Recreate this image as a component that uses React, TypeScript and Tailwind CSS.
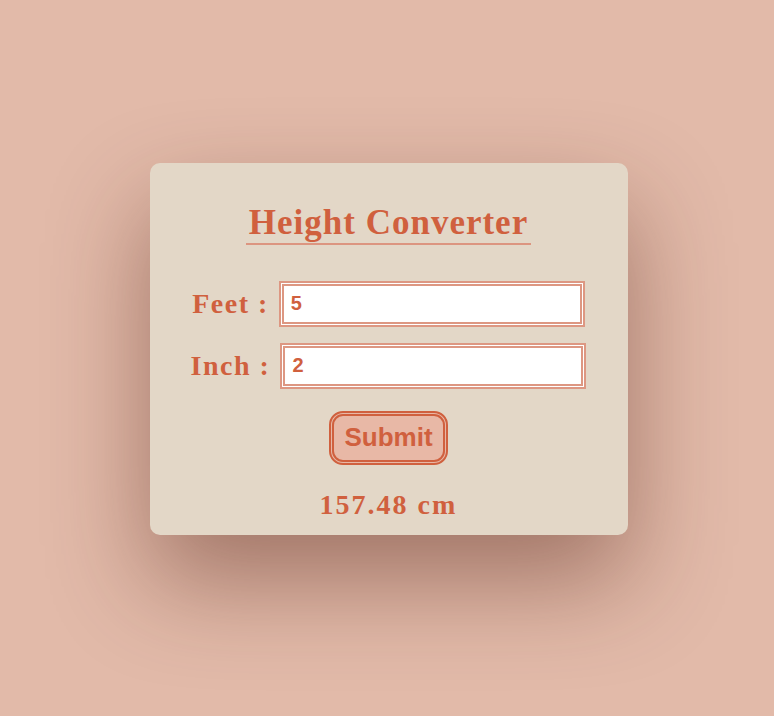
import React from 'react';

export default function App() {
  return (
    <div className="min-h-screen w-full bg-[#e2baa9] flex items-center justify-center pb-[19px] pl-[3px]">
      <div className="w-[478px] bg-[#e3d7c7] rounded-[10px] shadow-[0_45px_100px_rgba(80,30,20,0.45)] pt-[41px] pb-[14px] flex flex-col items-center text-[#d0603e]">
        <h1 className="inline-block font-['Liberation_Serif','Times_New_Roman',serif] text-[35px] leading-[38px] font-bold tracking-[1px] px-[3px] pb-[1px] border-b-2 border-[#dc9580]">
          Height Converter
        </h1>

        <div className="mt-[36px] flex flex-col items-center gap-4">
          <Row label="Feet :" value="5" />
          <Row label="Inch :" value="2" />
        </div>

        <button className="mt-[22px] h-[54px] px-[10px] rounded-[14px] border-[5px] border-double border-[#d0603e] bg-[#e8b8a6] font-['Liberation_Sans',Arial,sans-serif] text-[26px] font-bold">
          Submit
        </button>

        <p className="mt-[24px] font-['Liberation_Serif','Times_New_Roman',serif] text-[28px] leading-[32px] font-bold tracking-[2px]">
          157.48 cm
        </p>
      </div>
    </div>
  );
}

function Row({ label, value }: { label: string; value: string }) {
  return (
    <div className="flex items-center gap-[10px]">
      <label className="font-['Liberation_Serif','Times_New_Roman',serif] text-[28px] font-bold tracking-[1.5px]">
        {label}
      </label>
      <input
        readOnly
        value={value}
        className="w-[306px] h-[46px] border-[5px] border-double border-[#dd9782] bg-white px-[7px] font-['Liberation_Sans',Arial,sans-serif] text-[20px] font-bold text-[#d0603e] outline-none"
      />
    </div>
  );
}
